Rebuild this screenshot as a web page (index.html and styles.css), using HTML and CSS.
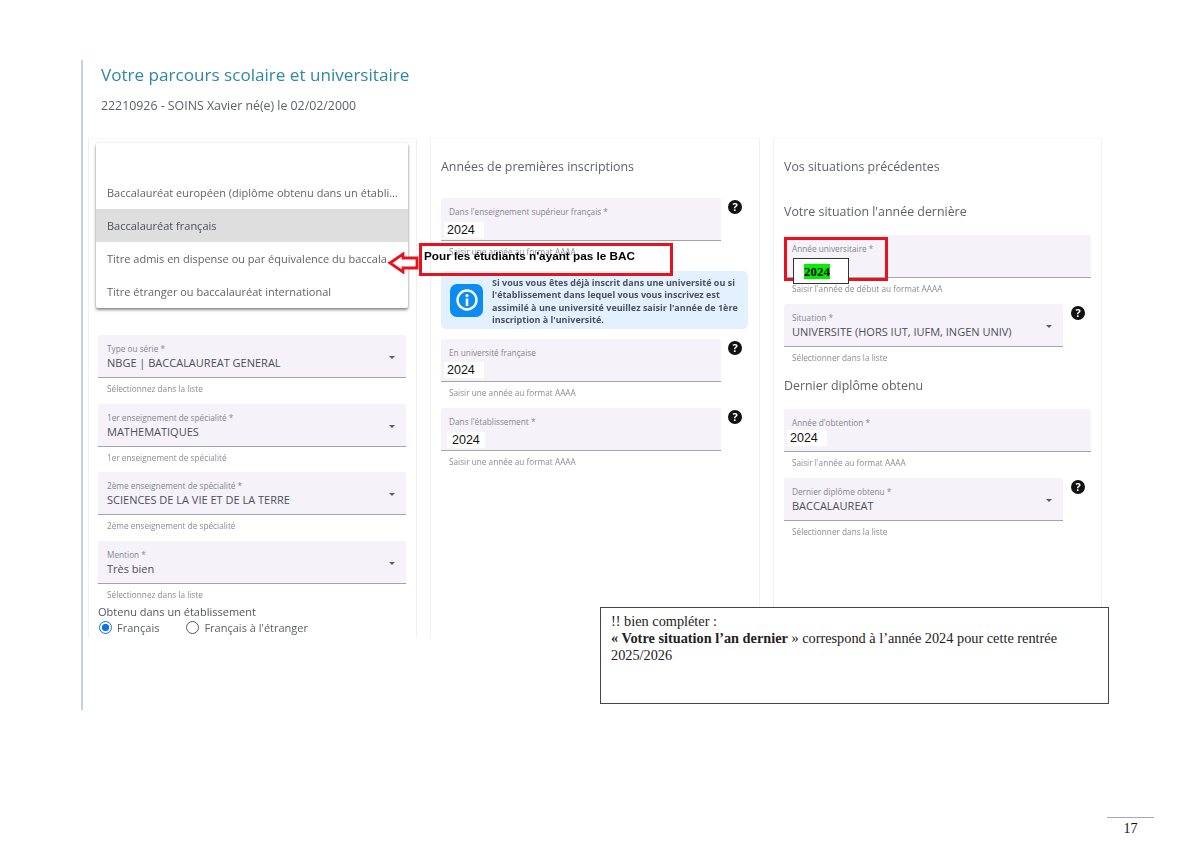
FILE: index.html
```html
<!DOCTYPE html>
<html lang="fr">
<head>
<meta charset="utf-8">
<title>Votre parcours scolaire et universitaire</title>
<link rel="stylesheet" href="styles.css">
</head>
<body>
<div class="page">
  <main class="shot">
    <h1 class="title">Votre parcours scolaire et universitaire</h1>
    <p class="subtitle">22210926 - SOINS Xavier né(e) le 02/02/2000</p>
    <div class="columns">
      <section class="panel panel-first">
        <ul class="menu">
          <li class="menu-item">Baccalauréat européen (diplôme obtenu dans un établi...</li>
          <li class="menu-item menu-item-active">Baccalauréat français</li>
          <li class="menu-item">Titre admis en dispense ou par équivalence du baccala...</li>
          <li class="menu-item">Titre étranger ou baccalauréat international</li>
        </ul>
        <div class="group wide">
          <div class="field"><span class="label">Type ou série *</span><span class="value">NBGE | BACCALAUREAT GENERAL</span><i class="caret"></i></div>
          <p class="helper">Sélectionnez dans la liste</p>
        </div>
        <div class="group wide">
          <div class="field"><span class="label">1er enseignement de spécialité *</span><span class="value">MATHEMATIQUES</span><i class="caret"></i></div>
          <p class="helper">1er enseignement de spécialité</p>
        </div>
        <div class="group wide">
          <div class="field"><span class="label">2ème enseignement de spécialité *</span><span class="value">SCIENCES DE LA VIE ET DE LA TERRE</span><i class="caret"></i></div>
          <p class="helper">2ème enseignement de spécialité</p>
        </div>
        <div class="group wide group-last">
          <div class="field"><span class="label">Mention *</span><span class="value">Très bien</span><i class="caret"></i></div>
          <p class="helper">Sélectionnez dans la liste</p>
        </div>
        <p class="radio-title">Obtenu dans un établissement</p>
        <div class="radios">
          <span class="radio radio-on"></span><span class="radio-label">Français</span>
          <span class="radio radio-second"></span><span class="radio-label">Français à l'étranger</span>
        </div>
      </section>

      <section class="panel">
        <h2 class="heading heading-first">Années de premières inscriptions</h2>
        <div class="row row-info">
          <div class="group narrow">
            <div class="field"><span class="label">Dans l'enseignement supérieur français *</span><span class="patch patch-first">2024</span></div>
            <p class="helper">Saisir une année au format AAAA</p>
          </div>
          <span class="help">?</span>
        </div>
        <div class="info">
          <span class="info-icon"><svg viewBox="0 0 32 32" width="32" height="32"><circle cx="16" cy="16" r="9.5" fill="none" stroke="#fff" stroke-width="2.4"/><circle cx="16" cy="11.6" r="1.6" fill="#fff"/><rect x="14.7" y="14.5" width="2.6" height="7.5" fill="#fff"/></svg></span>
          <p class="info-text">Si vous vous êtes déjà inscrit dans une université ou si l'établissement dans lequel vous vous inscrivez est assimilé à une université veuillez saisir l'année de 1ère inscription à l'université.</p>
        </div>
        <div class="row">
          <div class="group narrow">
            <div class="field"><span class="label">En université française</span><span class="patch">2024</span></div>
            <p class="helper">Saisir une année au format AAAA</p>
          </div>
          <span class="help">?</span>
        </div>
        <div class="row">
          <div class="group narrow">
            <div class="field"><span class="label">Dans l'établissement *</span><span class="patch patch-inset">2024</span></div>
            <p class="helper">Saisir une année au format AAAA</p>
          </div>
          <span class="help">?</span>
        </div>
      </section>

      <section class="panel">
        <h2 class="heading">Vos situations précédentes</h2>
        <h2 class="heading heading-sub">Votre situation l'année dernière</h2>
        <div class="group full">
          <div class="field"><span class="label">Année universitaire *</span></div>
          <p class="helper">Saisir l'année de début au format AAAA</p>
        </div>
        <div class="row">
          <div class="group medium">
            <div class="field"><span class="label">Situation *</span><span class="value">UNIVERSITE (HORS IUT, IUFM, INGEN UNIV)</span><i class="caret"></i></div>
            <p class="helper">Sélectionner dans la liste</p>
          </div>
          <span class="help help-far">?</span>
        </div>
        <h2 class="heading heading-tight">Dernier diplôme obtenu</h2>
        <div class="group full">
          <div class="field"><span class="label">Année d'obtention *</span><span class="patch patch-high">2024</span></div>
          <p class="helper">Saisir l'année au format AAAA</p>
        </div>
        <div class="row">
          <div class="group medium">
            <div class="field"><span class="label">Dernier diplôme obtenu *</span><span class="value">BACCALAUREAT</span><i class="caret"></i></div>
            <p class="helper">Sélectionner dans la liste</p>
          </div>
          <span class="help help-far">?</span>
        </div>
      </section>
    </div>
  </main>

  <footer class="page-number">17</footer>

  <div class="callout">Pour les étudiants n'ayant pas le BAC</div>
  <svg class="arrow" viewBox="0 0 32 22" width="32" height="22"><path d="M2 11 L15 2 L15 6 L29 6 L29 16 L15 16 L15 20 Z" fill="#fff" stroke="#e8121f" stroke-width="2.8"/></svg>
  <div class="red-frame"></div>
  <div class="year-box"><span class="year-mark">2024</span></div>
  <aside class="note">
    !! bien compléter :<br>
    <strong>« Votre situation l’an dernier</strong> » correspond à l’année 2024 pour cette rentrée 2025/2026
  </aside>
</div>
</body>
</html>
```
FILE: styles.css
```css
* { box-sizing: border-box; }
html, body { margin: 0; padding: 0; background: #fff; }
.page {
  position: relative;
  width: 1200px;
  height: 848px;
  padding: 60px 0 0 81px;
  overflow: hidden;
  font-family: "Open Sans", "Liberation Sans", sans-serif;
}
.shot {
  height: 650px;
  border-left: 2px solid #c3d2e8;
  padding: 3px 0 0 5px;
  filter: blur(0.35px);
}
.title {
  margin: 0 0 0 13px;
  font-size: 17.1px;
  line-height: 24px;
  font-weight: 400;
  color: #2f87a4;
}
.subtitle {
  margin: 11px 0 0 13px;
  font-size: 12.35px;
  line-height: 16px;
  color: #5c5f68;
}
.columns {
  display: grid;
  grid-template-columns: 329px 330px 329px;
  column-gap: 13px;
  margin-top: 24px;
}
.panel {
  height: 500px;
  padding: 18px 10px 0;
  border-left: 1px solid #f1f1f5;
  border-right: 1px solid #f1f1f5;
  border-top: 1px solid #f8f8fa;
}
.panel-first { padding: 4px 10px 0 7px; }

.menu {
  list-style: none;
  width: 312px;
  height: 165px;
  margin: 0 0 27px;
  padding: 33px 0 0;
  background: #fff;
  border-radius: 2px;
  box-shadow: 0 2px 3px rgba(0,0,0,.45), 0 0 3px rgba(0,0,0,.12);
}
.menu-item {
  height: 33px;
  padding-left: 11px;
  font-size: 11px;
  line-height: 33px;
  white-space: nowrap;
  color: #62646c;
}
.menu-item-active { background: #dedede; color: #4c4f5a; }

.group { height: 69px; }
.wide { width: 308px; margin-left: 2px; height: 68.7px; }
.narrow { width: 280px; }
.medium { width: 279px; }
.full { width: 307px; }
.group-last { height: 63px; }

.field {
  position: relative;
  height: 43px;
  padding: 8px 8px 0;
  background: #f5f2f9;
  border-bottom: 1px solid #a3a3a8;
  border-radius: 2px 2px 0 0;
}
.wide .field { padding-left: 9px; }
.label {
  display: block;
  height: 12px;
  font-size: 8.25px;
  line-height: 11px;
  color: #85868e;
  white-space: nowrap;
}
.value {
  display: block;
  font-size: 11px;
  line-height: 16px;
  color: #4d4f5a;
  white-space: nowrap;
}
.patch {
  display: block;
  width: fit-content;
  margin: 3px 0 0 -5px;
  padding: 0 9px 0 3px;
  background: #fff;
  font-family: "Liberation Sans", sans-serif;
  font-size: 12.5px;
  line-height: 16px;
  color: #111;
}
.patch-first { margin-top: 4px; }
.patch-high { margin-top: 1px; }
.patch-inset { margin-top: 4px; margin-left: -2px; padding-left: 5px; padding-right: 5px; }
.caret {
  position: absolute;
  top: 21px;
  right: 11px;
  border-left: 3.5px solid transparent;
  border-right: 3.5px solid transparent;
  border-top: 3.5px solid #5a5a62;
}
.helper {
  margin: 6px 0 0 8px;
  font-size: 8.25px;
  line-height: 10px;
  color: #8b8c92;
  white-space: nowrap;
}
.wide .helper { margin-left: 9px; }

.row { display: flex; align-items: flex-start; }
.row-info { height: 73px; }
.help {
  flex: none;
  width: 14px;
  height: 14px;
  margin: 2px 0 0 7px;
  border-radius: 50%;
  background: #111;
  color: #fff;
  font-size: 11px;
  font-weight: 700;
  line-height: 14px;
  text-align: center;
}
.help-far { margin-left: 8px; }

.heading {
  margin: 0;
  font-size: 12.4px;
  line-height: 20px;
  font-weight: 400;
  color: #5f626b;
  white-space: nowrap;
}
.heading-first { margin-bottom: 21px; }
.heading-sub { margin-top: 25px; margin-bottom: 13px; }
.heading-tight { margin-top: 3px; margin-bottom: 13px; }

.info {
  display: flex;
  align-items: center;
  gap: 9px;
  width: 307px;
  height: 58px;
  margin-bottom: 10px;
  padding: 0 4px 0 9px;
  background: #e3f0fd;
  border-radius: 5px;
}
.info-icon {
  flex: none;
  width: 33px;
  height: 33px;
  display: flex;
  align-items: center;
  justify-content: center;
  background: #0a8cf2;
  border-radius: 7px;
}
.info-text {
  margin: 0;
  padding-top: 3px;
  font-size: 9px;
  line-height: 12.4px;
  font-weight: 700;
  color: #4b505e;
}

.radio-title {
  margin: 0 0 0 2px;
  font-size: 11px;
  line-height: 16px;
  color: #55575f;
}
.radios {
  display: flex;
  align-items: center;
  margin: -1px 0 0 3px;
  height: 16px;
  font-size: 11px;
  color: #5d5f68;
}
.radio {
  width: 13px;
  height: 13px;
  border: 1.5px solid #55575f;
  border-radius: 50%;
  margin-right: 5px;
  background: #fff;
}
.radio-on {
  border-color: #0a73e8;
  background: radial-gradient(circle, #0a73e8 0 3.4px, #fff 3.9px);
}
.radio-second { margin-left: 27px; }

.page-number {
  width: 47px;
  margin: 107px 0 0 1026px;
  padding-top: 2px;
  border-top: 1px solid #a9a9a9;
  font-family: "Liberation Serif", serif;
  font-size: 14px;
  line-height: 18px;
  text-align: center;
  color: #111;
}

.callout {
  position: absolute;
  left: 419px;
  top: 243px;
  width: 254px;
  height: 33px;
  padding: 3px 0 0 2px;
  border: 3px solid #e8121f;
  font-family: "Liberation Sans", sans-serif;
  font-size: 11.75px;
  font-weight: 700;
  line-height: 14px;
  color: #000;
  white-space: nowrap;
}
.arrow { position: absolute; left: 388px; top: 252px; }
.red-frame {
  position: absolute;
  left: 784px;
  top: 237px;
  width: 104px;
  height: 44px;
  border: 3px solid #e8121f;
}
.year-box {
  position: absolute;
  left: 793px;
  top: 258px;
  width: 56px;
  height: 26px;
  padding: 5px 0 0 10px;
  background: #fff;
  border: 1px solid #333;
  font-family: "Liberation Serif", serif;
  font-size: 13px;
  font-weight: 700;
  line-height: 15px;
  color: #000;
}
.year-mark { background: #00f000; }
.note {
  position: absolute;
  left: 600px;
  top: 607px;
  width: 509px;
  height: 97px;
  padding: 5px 40px 0 10px;
  background: #fff;
  border: 1px solid #444;
  font-family: "Liberation Serif", serif;
  font-size: 14.3px;
  line-height: 17px;
  color: #222;
}
```
